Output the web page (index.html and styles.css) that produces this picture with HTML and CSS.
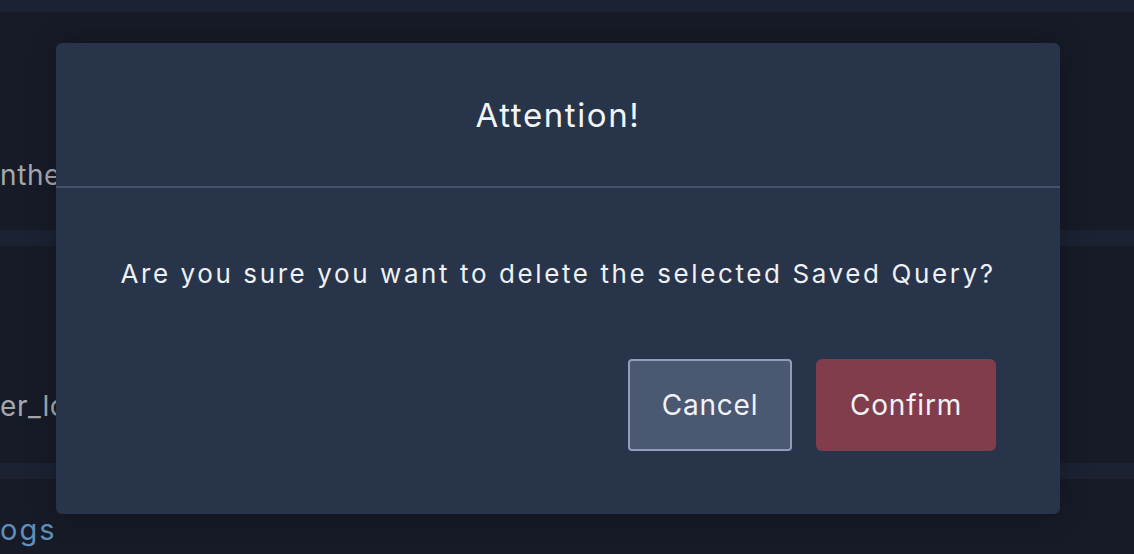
FILE: index.html
```html
<!DOCTYPE html>
<html lang="en">
<head>
<meta charset="utf-8">
<title>Delete Saved Query</title>
<link rel="stylesheet" href="styles.css">
</head>
<body>
<div class="page">
  <div class="topbar"></div>
  <div class="row row-1"><span class="cell-text">nther</span></div>
  <div class="sep"></div>
  <div class="row row-2"><span class="cell-text">er_lo</span></div>
  <div class="sep"></div>
  <div class="row row-3"><span class="cell-link">ogs</span></div>
</div>

<div class="modal" role="dialog" aria-labelledby="modal-title">
  <div class="modal-header">
    <h2 id="modal-title" class="modal-title">Attention!</h2>
  </div>
  <div class="modal-body">
    <p class="modal-message">Are you sure you want to delete the selected Saved Query?</p>
    <div class="modal-actions">
      <button class="btn btn-cancel" type="button">Cancel</button>
      <button class="btn btn-confirm" type="button">Confirm</button>
    </div>
  </div>
</div>
</body>
</html>
```

FILE: styles.css
```css
* { box-sizing: border-box; }

html, body {
  margin: 0;
  padding: 0;
  width: 1134px;
  height: 554px;
  overflow: hidden;
  background: #161b27;
  font-family: "Inter", "Noto Sans", sans-serif;
}

.page {
  display: flex;
  flex-direction: column;
  height: 554px;
}

.topbar {
  height: 12px;
  background: #1b2232;
}

.row {
  display: flex;
  align-items: flex-end;
  overflow: hidden;
}

.row-1 { height: 218px; padding-bottom: 38px; }
.row-2 { height: 217px; padding-bottom: 40px; }
.row-3 { flex: 1; align-items: flex-start; padding-top: 36px; }

.sep {
  height: 16px;
  background: #1b2232;
}

.cell-text {
  font-size: 28px;
  letter-spacing: 0.6px;
  color: #a5a8ae;
  white-space: nowrap;
}

.cell-link {
  font-size: 29px;
  letter-spacing: 2px;
  color: #5f8fba;
  line-height: 1;
}

.modal {
  position: absolute;
  left: 56px;
  top: 43px;
  width: 1004px;
  height: 471px;
  background: #283449;
  border-radius: 6px;
  display: flex;
  flex-direction: column;
  box-shadow: 0 0 30px rgba(0, 0, 0, 0.25);
}

.modal-header {
  height: 145px;
  border-bottom: 2px solid #46526d;
  display: flex;
  justify-content: center;
  padding-top: 52px;
}

.modal-title {
  margin: 0;
  font-size: 33px;
  font-weight: 400;
  letter-spacing: 1.6px;
  color: #f3f4f6;
  line-height: 40px;
}

.modal-body {
  display: flex;
  flex-direction: column;
  padding: 66px 40px 0;
}

.modal-message {
  margin: 0;
  text-align: center;
  font-size: 26px;
  letter-spacing: 2.6px;
  color: #eef0f3;
  line-height: 40px;
  white-space: nowrap;
}

.modal-actions {
  display: flex;
  justify-content: flex-end;
  gap: 24px;
  margin-top: 65px;
  padding-right: 24px;
}

.btn {
  height: 92px;
  font-family: inherit;
  font-size: 28px;
  letter-spacing: 0.8px;
  color: #f1f2f5;
  border-radius: 4px;
  cursor: pointer;
}

.btn-cancel {
  width: 164px;
  background: #4a5872;
  border: 2px solid #8e9dba;
}

.btn-confirm {
  width: 180px;
  background: #823d4d;
  border: none;
  border-radius: 6px;
}
```
